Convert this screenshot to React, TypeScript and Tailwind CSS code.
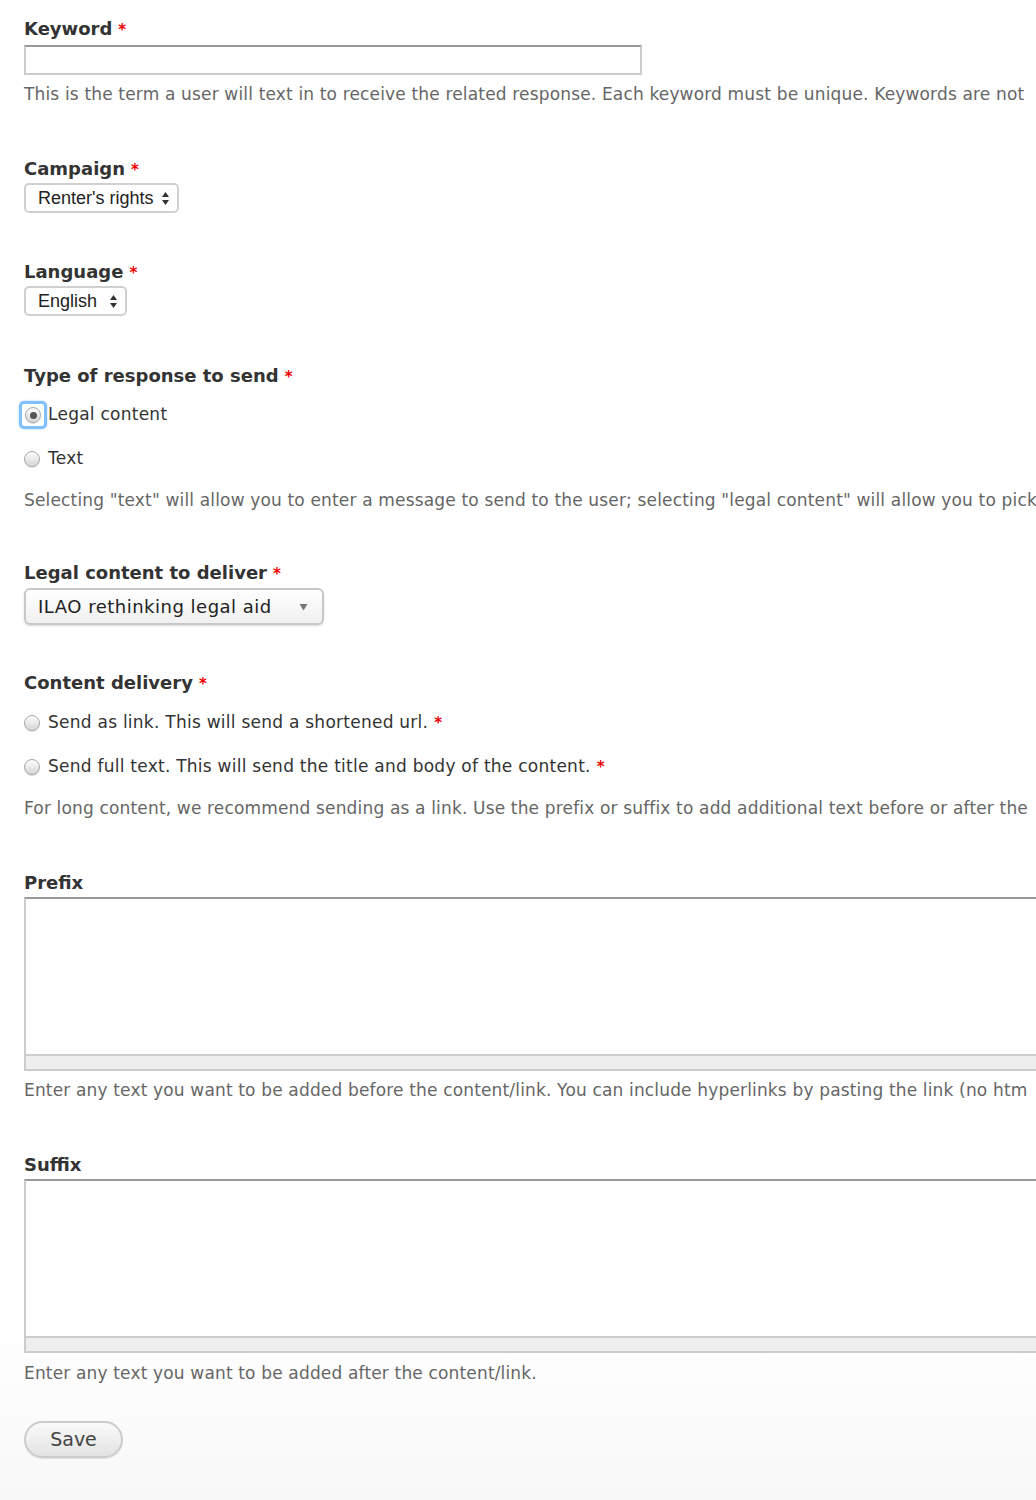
import React from "react";

const font = { fontFamily: '"DejaVu Sans", "Lucida Grande", sans-serif' };

function Req() {
  return <span className="ml-[6px] text-[15px] font-bold text-[#e00]">*</span>;
}

function Label({ children, required = true }: { children: React.ReactNode; required?: boolean }) {
  return (
    <div className="text-[18px] font-bold leading-[22px] text-[#333]">
      {children}
      {required ? <Req /> : null}
    </div>
  );
}

function Desc({ children }: { children: React.ReactNode }) {
  return (
    <div className="whitespace-nowrap text-[17px] leading-[22px] tracking-[0.16px] text-[#666]">{children}</div>
  );
}

function Radio({ checked = false, focused = false }: { checked?: boolean; focused?: boolean }) {
  const dot = (
    <span className="flex h-[16px] w-[16px] shrink-0 items-center justify-center rounded-full border border-[#a9a9a9] bg-gradient-to-b from-[#fdfdfd] to-[#d6d6d6] shadow-[0_1px_1px_rgba(0,0,0,0.15)]">
      {checked ? <span className="h-[7px] w-[7px] rounded-full bg-[#555]" /> : null}
    </span>
  );
  if (focused) {
    return (
      <span className="-ml-[5px] mr-[1px] flex h-[28px] w-[28px] items-center justify-center rounded-[5px] border-[3px] border-[#80c0f8] shadow-[0_0_2px_rgba(90,160,240,0.6)]">
        {dot}
      </span>
    );
  }
  return <span className="mr-[8px]">{dot}</span>;
}

function Arrows() {
  return (
    <svg width="9" height="15" viewBox="0 0 9 15" className="shrink-0">
      <path d="M4.5 1 L8 6 L1 6 Z" fill="#333" />
      <path d="M4.5 14 L8 9 L1 9 Z" fill="#333" />
    </svg>
  );
}

function SmallSelect({ value, width }: { value: string; width: string }) {
  return (
    <div
      className={`mt-[2px] flex h-[30px] ${width} items-center justify-between rounded-[5px] border-2 border-[#cfcfcf] bg-white pl-[12px] pr-[7px] text-[18px] text-[#222]`}
      style={{ fontFamily: '"Liberation Sans", Arial, sans-serif' }}
    >
      <span>{value}</span>
      <Arrows />
    </div>
  );
}

function TextArea() {
  return (
    <div className="mt-[3px] w-[1100px]">
      <div className="h-[157px] border-2 border-b-0 border-[#ccc] border-t-[#999] bg-white" />
      <div className="h-[17px] border-2 border-[#ccc] bg-[#eee]" />
    </div>
  );
}

function RadioRow({ children, className }: { children: React.ReactNode; className: string }) {
  return (
    <div className={`${className} flex h-[28px] items-center text-[17px] tracking-[0.25px] text-[#333]`}>{children}</div>
  );
}

export default function App() {
  return (
    <div
      className="min-h-[1500px] w-[1036px] overflow-hidden bg-gradient-to-b from-white from-88% to-[#f8f8f8] pl-[24px] pt-[18px]"
      style={font}
    >
      <Label>Keyword</Label>
      <div className="mt-[4px] h-[30px] w-[618px] border-2 border-[#ccc] border-t-[#999] bg-white" />
      <div className="mt-[8px]">
        <Desc>
          This is the term a user will text in to receive the related response. Each keyword must be unique. Keywords are not
        </Desc>
      </div>

      <div className="mt-[53px]">
        <Label>Campaign</Label>
        <SmallSelect value="Renter's rights" width="w-[155px]" />
      </div>

      <div className="mt-[48px]">
        <Label>Language</Label>
        <SmallSelect value="English" width="w-[103px]" />
      </div>

      <div className="mt-[49px]">
        <Label>Type of response to send</Label>
        <RadioRow className="mt-[13px]">
          <Radio checked focused />
          <span>Legal content</span>
        </RadioRow>
        <RadioRow className="mt-[16px]">
          <Radio />
          <span>Text</span>
        </RadioRow>
        <div className="mt-[16px]">
          <Desc>
            Selecting "text" will allow you to enter a message to send to the user; selecting "legal content" will allow you to pick
          </Desc>
        </div>
      </div>

      <div className="mt-[51px]">
        <Label>Legal content to deliver</Label>
        <div className="mt-[3px] flex h-[37px] w-[300px] items-center justify-between rounded-[6px] border-2 border-[#c8c8c8] bg-gradient-to-b from-white to-[#f0f0f0] pl-[12px] pr-[14px] text-[18px] tracking-[0.5px] text-[#222] shadow-[0_1px_2px_rgba(0,0,0,0.15)]">
          <span>ILAO rethinking legal aid</span>
          <svg width="9" height="8" viewBox="0 0 9 8">
            <path d="M0.5 1 L8.5 1 L4.5 7.5 Z" fill="#777" />
          </svg>
        </div>
      </div>

      <div className="mt-[47px]">
        <Label>Content delivery</Label>
        <RadioRow className="mt-[14px]">
          <Radio />
          <span>Send as link. This will send a shortened url.</span>
          <Req />
        </RadioRow>
        <RadioRow className="mt-[16px]">
          <Radio />
          <span>Send full text. This will send the title and body of the content.</span>
          <Req />
        </RadioRow>
        <div className="mt-[16px]">
          <Desc>
            For long content, we recommend sending as a link. Use the prefix or suffix to add additional text before or after the
          </Desc>
        </div>
      </div>

      <div className="mt-[53px]">
        <Label required={false}>Prefix</Label>
        <TextArea />
        <div className="mt-[8px]">
          <Desc>
            Enter any text you want to be added before the content/link. You can include hyperlinks by pasting the link (no htm
          </Desc>
        </div>
      </div>

      <div className="mt-[53px]">
        <Label required={false}>Suffix</Label>
        <TextArea />
        <div className="mt-[9px]">
          <Desc>Enter any text you want to be added after the content/link.</Desc>
        </div>
      </div>

      <button
        type="button"
        className="mt-[37px] flex h-[37px] w-[99px] items-center justify-center rounded-full border-2 border-[#ccc] bg-gradient-to-b from-[#fafafa] to-[#e3e3e3] text-[19px] text-[#444] shadow-[0_1px_1px_rgba(0,0,0,0.1)]"
        style={font}
      >
        Save
      </button>
    </div>
  );
}
